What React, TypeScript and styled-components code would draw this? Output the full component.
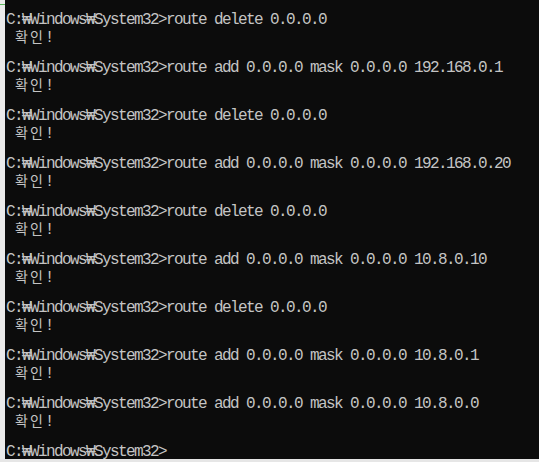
import React from "react";
import styled, { createGlobalStyle } from "styled-components";

const Global = createGlobalStyle`
  html, body { margin: 0; padding: 0; background: #0c0c0c; }
  body { width: 539px; height: 462px; overflow: hidden; }
`;

const Frame = styled.div`
  width: 539px;
  height: 462px;
  display: flex;
  flex-direction: column;
`;

const Main = styled.div`
  flex: 1;
  display: flex;
  min-height: 0;
`;

const LeftEdge = styled.div`
  width: 5px;
  background: #ebebeb;
  display: flex;
  flex-direction: column;
  padding-top: 4px;
  box-sizing: border-box;
`;

const GreenMark = styled.div`
  height: 1px;
  background: #5cb85c;
`;

const Console = styled.div`
  flex: 1;
  background: #0c0c0c;
  color: #c4c4c4;
  font-family: "Liberation Mono", "DejaVu Sans Mono", monospace;
  font-size: 16px;
  line-height: 16px;
  padding: 12px 0 0 1px;
  white-space: pre;
`;

const Line = styled.div`
  height: 16px;
  letter-spacing: -1.6px;
`;

const Wide = styled.span`
  font-family: "Noto Sans CJK KR", sans-serif;
  font-size: 14px;
  line-height: 16px;
  letter-spacing: 2px;
  padding-left: 1px;
`;

const BottomEdge = styled.div`
  height: 3px;
  background: #e6e6e6;
`;

const PROMPT = "C:₩Windows₩System32>";

const commands = [
  "route delete 0.0.0.0",
  "route add 0.0.0.0 mask 0.0.0.0 192.168.0.1",
  "route delete 0.0.0.0",
  "route add 0.0.0.0 mask 0.0.0.0 192.168.0.20",
  "route delete 0.0.0.0",
  "route add 0.0.0.0 mask 0.0.0.0 10.8.0.10",
  "route delete 0.0.0.0",
  "route add 0.0.0.0 mask 0.0.0.0 10.8.0.1",
  "route add 0.0.0.0 mask 0.0.0.0 10.8.0.0",
];

const Ok = () => (
  <Line>
    {" "}
    <Wide>확인</Wide>!
  </Line>
);

export default function App() {
  return (
    <>
      <Global />
      <Frame>
        <Main>
          <LeftEdge>
            <GreenMark />
          </LeftEdge>
          <Console>
            {commands.map((c, i) => (
              <React.Fragment key={i}>
                <Line>{PROMPT + c}</Line>
                <Ok />
                <Line />
              </React.Fragment>
            ))}
            <Line>{PROMPT}</Line>
          </Console>
        </Main>
        <BottomEdge />
      </Frame>
    </>
  );
}
